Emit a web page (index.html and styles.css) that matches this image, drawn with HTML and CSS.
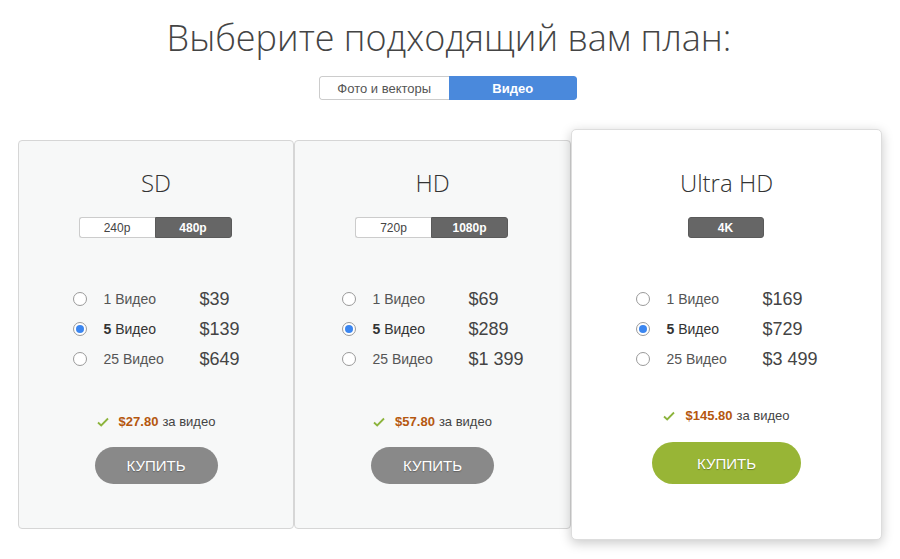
FILE: index.html
```html
<!DOCTYPE html>
<html lang="ru">
<head>
<meta charset="utf-8">
<link rel="stylesheet" href="styles.css">
</head>
<body>
<div class="page">
  <h1 class="title">Выберите подходящий вам план:</h1>
  <div class="tabs">
    <span class="tab">Фото и векторы</span>
    <span class="tab tab-active">Видео</span>
  </div>
  <div class="plans">
    <div class="card card-sd">
      <div class="card-title">SD</div>
      <div class="res">
        <span class="res-opt">240p</span>
        <span class="res-opt res-active">480p</span>
      </div>
      <div class="options">
        <div class="opt"><span class="radio"></span><span class="label">1 Видео</span><span class="price">$39</span></div>
        <div class="opt"><span class="radio radio-on"></span><span class="label label-on">5 Видео</span><span class="price">$139</span></div>
        <div class="opt"><span class="radio"></span><span class="label">25 Видео</span><span class="price">$649</span></div>
      </div>
      <div class="per"><svg class="check" width="12" height="10" viewBox="0 0 12 10"><path d="M1 5.5 L4.2 8.5 L11 1.5" fill="none" stroke="#8cb43c" stroke-width="1.8"/></svg><b class="per-price">$27.80</b> за видео</div>
      <button class="buy">КУПИТЬ</button>
    </div>
    <div class="card card-hd">
      <div class="card-title">HD</div>
      <div class="res">
        <span class="res-opt">720p</span>
        <span class="res-opt res-active">1080p</span>
      </div>
      <div class="options">
        <div class="opt"><span class="radio"></span><span class="label">1 Видео</span><span class="price">$69</span></div>
        <div class="opt"><span class="radio radio-on"></span><span class="label label-on">5 Видео</span><span class="price">$289</span></div>
        <div class="opt"><span class="radio"></span><span class="label">25 Видео</span><span class="price">$1 399</span></div>
      </div>
      <div class="per"><svg class="check" width="12" height="10" viewBox="0 0 12 10"><path d="M1 5.5 L4.2 8.5 L11 1.5" fill="none" stroke="#8cb43c" stroke-width="1.8"/></svg><b class="per-price">$57.80</b> за видео</div>
      <button class="buy">КУПИТЬ</button>
    </div>
    <div class="card card-uhd">
      <div class="card-title">Ultra HD</div>
      <div class="res res-single">
        <span class="res-opt res-active">4K</span>
      </div>
      <div class="options">
        <div class="opt"><span class="radio"></span><span class="label">1 Видео</span><span class="price">$169</span></div>
        <div class="opt"><span class="radio radio-on"></span><span class="label label-on">5 Видео</span><span class="price">$729</span></div>
        <div class="opt"><span class="radio"></span><span class="label">25 Видео</span><span class="price">$3 499</span></div>
      </div>
      <div class="per"><svg class="check" width="12" height="10" viewBox="0 0 12 10"><path d="M1 5.5 L4.2 8.5 L11 1.5" fill="none" stroke="#8cb43c" stroke-width="1.8"/></svg><b class="per-price">$145.80</b> за видео</div>
      <button class="buy buy-green">КУПИТЬ</button>
    </div>
  </div>
</div>
</body>
</html>
```
FILE: styles.css
```css
html, body {
  margin: 0;
  padding: 0;
  background: #fff;
}
.page {
  width: 900px;
  height: 559px;
  overflow: hidden;
  font-family: "Liberation Sans", Arial, sans-serif;
  color: #444;
}
.title {
  margin: 0;
  padding-top: 16px;
  height: 44px;
  line-height: 44px;
  text-align: center;
  font-family: "Open Sans", sans-serif;
  font-weight: 300;
  font-size: 36px;
  color: #444;
  letter-spacing: 0;
  padding-right: 2px;
}
.tabs {
  display: flex;
  width: 258px;
  height: 24px;
  margin: 16px 0 0 319px;
  box-sizing: border-box;
  border-radius: 3px;
  overflow: hidden;
}
.tab {
  flex: 1;
  display: flex;
  align-items: center;
  justify-content: center;
  font-size: 13px;
  color: #555;
  border: 1px solid #ccc;
  border-right: none;
  border-radius: 3px 0 0 3px;
  background: #fff;
}
.tab-active {
  background: #4a89dc;
  border: none;
  border-radius: 0 3px 3px 0;
  color: #fff;
  font-weight: bold;
}
.plans {
  display: flex;
  align-items: center;
  padding-left: 18px;
  margin-top: 29px;
}
.card {
  box-sizing: border-box;
  height: 389px;
  background: #f7f8f8;
  border: 1px solid #d6d6d6;
  border-radius: 4px;
  padding-top: 29px;
  display: flex;
  flex-direction: column;
  align-items: center;
}
.card-sd { width: 276px; }
.card-hd { width: 277px; }
.card-uhd {
  width: 311px;
  height: 411px;
  background: #fff;
  border: 1px solid #ddd;
  border-radius: 5px;
  padding-top: 40px;
  box-shadow: 0 3px 12px rgba(0,0,0,0.22);
}
.card-title {
  font-family: "Open Sans", sans-serif;
  font-weight: 300;
  font-size: 24px;
  line-height: 26px;
  color: #333;
}
.res {
  display: flex;
  width: 153px;
  height: 21px;
  margin-top: 21px;
  margin-right: 2px;
  box-sizing: border-box;
}
.res-single { width: 76px; margin-right: 2px; }
.res-opt {
  flex: 1;
  display: flex;
  align-items: center;
  justify-content: center;
  font-size: 12px;
  color: #444;
  background: #fff;
  border: 1px solid #ccc;
  border-right: none;
  border-radius: 3px 0 0 3px;
}
.res-active {
  background: #666;
  border: 1px solid #5a5a5a;
  border-radius: 0 3px 3px 0;
  color: #fff;
  font-weight: bold;
}
.res-single .res-active { border-radius: 3px; }
.options {
  margin-top: 46px;
  display: flex;
  flex-direction: column;
}
.opt {
  height: 30px;
  display: flex;
  align-items: center;
}
.radio {
  box-sizing: border-box;
  width: 14px;
  height: 14px;
  margin-left: 1px;
  border: 1px solid #9a9a9a;
  border-radius: 50%;
  background: #fff;
  position: relative;
}
.radio-on::after {
  content: "";
  position: absolute;
  left: 2px;
  top: 2px;
  width: 8px;
  height: 8px;
  border-radius: 50%;
  background: #3b86f0;
}
.label {
  margin-left: 16px;
  width: 96px;
  font-size: 14px;
  color: #555;
}
.label-on {
  color: #333;
}
.label-on::first-letter { font-weight: bold; }
.price {
  font-size: 18px;
  color: #444;
}
.per {
  margin-top: 39px;
  height: 18px;
  line-height: 18px;
  font-size: 13px;
  color: #444;
  display: flex;
  align-items: center;
}
.check { margin-right: 10px; }
.per-price {
  color: #b5570f;
  margin-right: 4px;
}
.buy {
  margin-top: 16px;
  width: 123px;
  height: 37px;
  border: none;
  border-radius: 19px;
  background: #898989;
  color: #fff;
  font-family: "Liberation Sans", Arial, sans-serif;
  font-size: 15px;
  text-shadow: 0 1px 1px rgba(0,0,0,0.3);
  padding: 0;
}
.card-uhd .per { margin-top: 33px; }
.buy-green {
  margin-top: 17px;
  width: 149px;
  height: 42px;
  border-radius: 21px;
  background: #98b536;
}
```
